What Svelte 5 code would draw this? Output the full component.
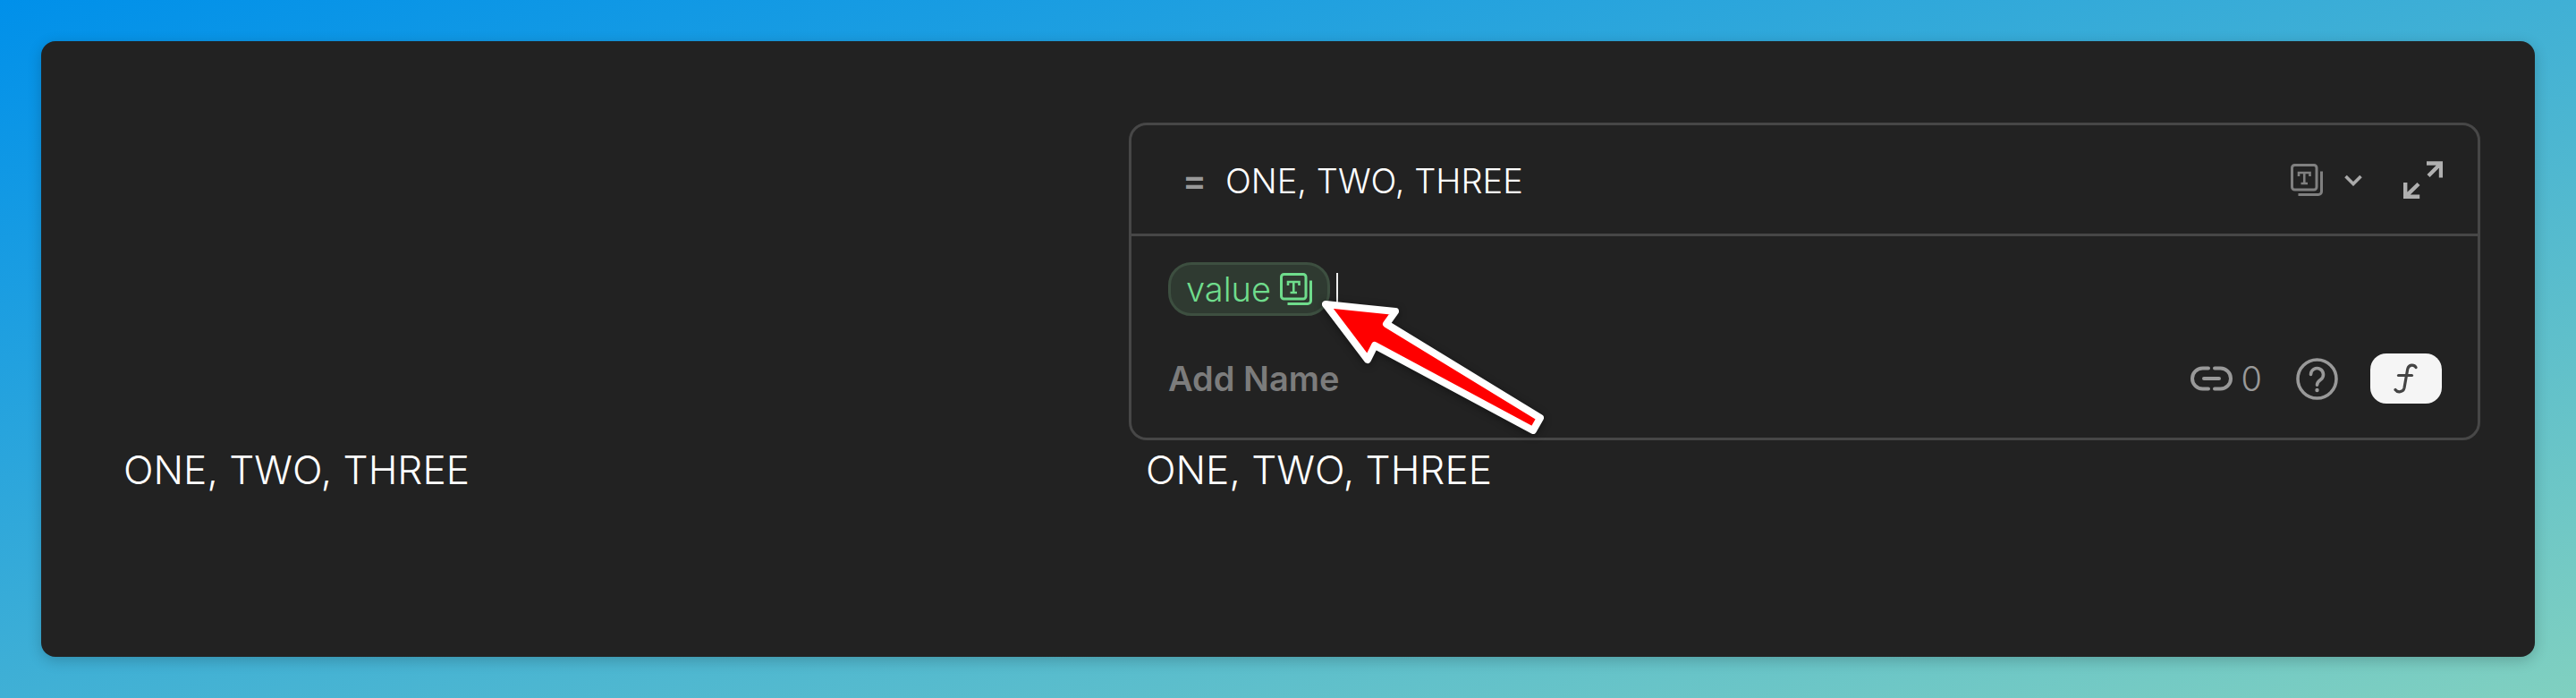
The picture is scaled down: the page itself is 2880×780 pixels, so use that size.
<script>
  const label = 'ONE, TWO, THREE';
</script>

<div class="page">
  <main class="window">
    <div class="cell first"><span class="output">{label}</span></div>
    <div class="cell"><span class="output">{label}</span></div>

    <section class="editor">
      <header class="head">
        <span class="eq">=</span>
        <span class="preview">{label}</span>
        <span class="head-actions">
          <svg class="type-icon" viewBox="0 0 36 36" fill="none" stroke="#808080" stroke-width="3">
            <rect x="1.500" y="1.500" width="27.500" height="27.500" rx="3" />
            <path d="M34.500 8.500V31a3.500 3.500 0 0 1-3.500 3.500H8.500" />
            <path d="M9 14v-4h12.500v4M15.250 10v12M11.500 22h7.500" stroke-width="2.600" />
          </svg>
          <svg class="chev" viewBox="0 0 20 13" fill="none" stroke="#aaa" stroke-width="3.600">
            <path d="M1.500 2l8.500 8.500L18.500 2" />
          </svg>
          <svg class="expand" viewBox="0 0 44 42" fill="none" stroke="#b0b0b0" stroke-width="4.400">
            <path d="M26 2.500h16v16M41 3.500L28 16.500" />
            <path d="M2.200 24v15.800h16M3.200 38.800L17 25.500" />
          </svg>
        </span>
      </header>

      <div class="body">
        <div class="formula">
          <span class="pill">
            value
            <svg class="type-icon" viewBox="0 0 36 36" fill="none" stroke="#6fdc8c" stroke-width="3">
              <rect x="1.500" y="1.500" width="27.500" height="27.500" rx="3" />
              <path d="M34.500 8.500V31a3.500 3.500 0 0 1-3.500 3.500H8.500" />
              <path d="M9 14v-4h12.500v4M15.250 10v12M11.500 22h7.500" stroke-width="2.600" />
            </svg>
          </span>
          <span class="caret"></span>
        </div>
        <div class="foot">
          <span class="name">Add Name</span>
          <span class="foot-actions">
            <span class="links">
              <svg class="link" viewBox="0 0 47 28" fill="none" stroke="#999" stroke-width="4" stroke-linecap="round">
                <path d="M20 2.500h-6.500a11.500 11.500 0 0 0 0 23H20M27 2.500h6.500a11.500 11.500 0 0 1 0 23H27" />
                <path d="M15 14h17" />
              </svg>
              <span class="count">0</span>
            </span>
            <svg class="help" viewBox="0 0 47 47" fill="none" stroke="#999" stroke-width="3.600">
              <circle cx="23.500" cy="23.500" r="21.500" />
              <path d="M16.500 18.500a7 7 0 1 1 11 5.800c-2.500 1.700-4 3-4 6" stroke-linecap="round" />
              <circle cx="23.500" cy="36" r="2.200" fill="#999" stroke="none" />
            </svg>
            <span class="fx">
              <svg viewBox="0 0 28 36" fill="none" stroke="#444" stroke-width="3.200" stroke-linecap="round">
                <path d="M25 5.500c-2-3.500-8-3.500-9.300 2L12 28.500c-1 5-7.500 5.500-10 2" />
                <path d="M5.500 14.500h15" />
              </svg>
            </span>
          </span>
        </div>
      </div>
    </section>

    <svg class="arrow" viewBox="0 0 300 190" fill="#f00" stroke="#fff" stroke-width="8" stroke-linejoin="round">
      <path d="M42 30L120 38 110 52 282 157 274 171 97 76 89 92Z" />
    </svg>
  </main>
</div>

<style>
  :global(body) {
    margin: 0;
  }
  .page {
    box-sizing: border-box;
    width: 2880px;
    height: 780px;
    padding: 46px;
    background: linear-gradient(to bottom right, #0090ea 0%, #80d0c0 100%);
    font-family: Inter, "Liberation Sans", sans-serif;
  }
  .window {
    position: relative;
    box-sizing: border-box;
    height: 688px;
    display: grid;
    grid-template-columns: 1143px 1fr;
    align-items: start;
    padding: 454px 92px 0;
    background: #222;
    border-radius: 16px;
    box-shadow: 0 4px 16px rgba(0, 0, 0, 0.2);
  }
  .output {
    color: #fff;
    font-size: 44.2px;
    font-weight: 300;
    line-height: 50px;
    white-space: nowrap;
  }
  .editor {
    position: absolute;
    left: 1216px;
    top: 91px;
    box-sizing: border-box;
    width: 1511px;
    height: 355px;
    background: #222;
    border: 3px solid #474747;
    border-radius: 20px;
    display: flex;
    flex-direction: column;
  }
  .head {
    flex: none;
    height: 124px;
    box-sizing: border-box;
    display: flex;
    align-items: center;
    padding: 0 39px 0 57px;
    border-bottom: 3px solid #474747;
  }
  .eq {
    width: 48px;
    padding-top: 2px;
    font-size: 40px;
    font-weight: 600;
    color: #999;
  }
  .preview {
    padding-top: 2px;
    color: #fff;
    font-size: 38px;
    font-weight: 300;
  }
  .head-actions {
    margin-left: auto;
    display: flex;
    align-items: center;
  }
  .type-icon {
    width: 36px;
    height: 36px;
    flex: none;
  }
  .chev {
    width: 20px;
    height: 13px;
    margin: 2px 46px 0 24px;
  }
  .expand {
    width: 44px;
    height: 42px;
  }
  .body {
    flex: 1;
    display: flex;
    flex-direction: column;
    padding: 29px 40px 0 41px;
  }
  .formula {
    display: flex;
    align-items: center;
    gap: 7px;
  }
  .pill {
    box-sizing: border-box;
    display: inline-flex;
    align-items: center;
    gap: 10px;
    height: 60px;
    padding: 0 17px;
    border: 3px solid #3d4f40;
    border-radius: 26px;
    background: #2f3a31;
    color: #6fdc8c;
    font-size: 38px;
    font-weight: 300;
  }
  .caret {
    width: 2px;
    height: 36px;
    background: #eee;
  }
  .foot {
    margin-top: 42px;
    display: flex;
    align-items: center;
    justify-content: space-between;
  }
  .name {
    color: #7c7c7c;
    font-size: 38px;
    font-weight: 600;
  }
  .foot-actions {
    display: flex;
    align-items: center;
  }
  .links {
    display: flex;
    align-items: center;
    gap: 10px;
    margin-right: 38px;
  }
  .link {
    width: 47px;
    height: 28px;
  }
  .count {
    color: #999;
    font-size: 38px;
    font-weight: 300;
  }
  .help {
    width: 47px;
    height: 47px;
    margin-right: 36px;
  }
  .fx {
    width: 80px;
    height: 56px;
    display: flex;
    align-items: center;
    justify-content: center;
    background: #f5f5f5;
    border-radius: 18px;
  }
  .fx svg {
    width: 28px;
    height: 36px;
  }
  .arrow {
    position: absolute;
    left: 1394px;
    top: 264px;
    width: 300px;
    height: 190px;
    filter: drop-shadow(0 2px 5px rgba(0, 0, 0, 0.4));
  }
</style>
